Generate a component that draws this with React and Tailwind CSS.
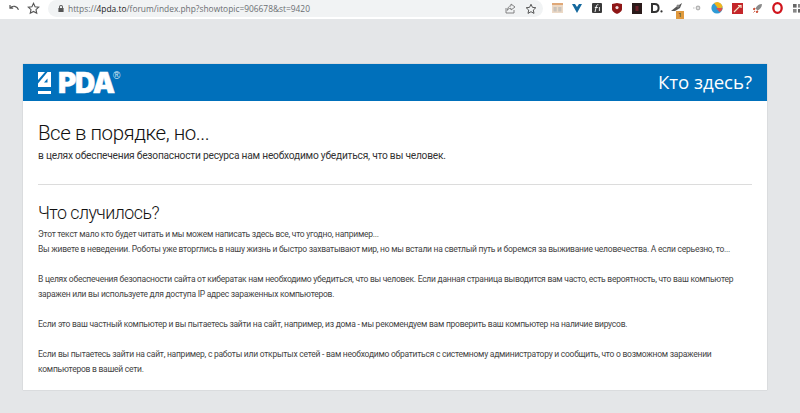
import React from "react";

const font = { fontFamily: 'Roboto, "Open Sans", sans-serif' };

const Slot = ({ children }) => (
  <div className="w-[20px] shrink-0 flex items-center justify-center relative">{children}</div>
);

function Toolbar() {
  return (
    <div className="h-[19px] bg-white flex items-start overflow-hidden shrink-0">
      <svg className="ml-[9px] mt-[4px] shrink-0" width="11" height="9" viewBox="0 0 11 9" fill="none" stroke="#555" strokeWidth="1.2">
        <path d="M1 1v3.2h3.2M1.2 4c1.2-1.4 3-2 4.6-1.6 1.600.4 3 1.500 3.700 3.400" />
      </svg>
      <svg className="ml-[7px] mt-[2px] shrink-0" width="13" height="13" viewBox="0 0 24 24" fill="none" stroke="#555" strokeWidth="2">
        <path d="M12 2.5l2.900 6.200 6.700.8-5 4.600 1.400 6.700-6-3.400-6 3.400 1.400-6.700-5-4.600 6.700-.8z" />
      </svg>
      <div className="ml-[8px] w-[495px] h-[17px] shrink-0 rounded-full bg-[#f1f3f4] flex items-center pl-[9px]">
        <svg width="6" height="7" viewBox="0 0 6 7" fill="#555" className="shrink-0 ml-[1px]">
          <path d="M1 3V2a2 2 0 0 1 4 0v1h.6v4H.4V3zM1.900 3h2.200V2a1.100 1.100 0 0 0-2.200 0z" />
        </svg>
        <span className="ml-[4px] mt-[1px] text-[8.4px] leading-none text-[#6b6f73] whitespace-nowrap" style={{ fontFamily: '"Open Sans", sans-serif' }}>
          https://<span className="text-[#222] font-medium">4pda.to</span>/forum/index.php?showtopic=906678&amp;st=9420
        </span>
        <svg className="ml-auto shrink-0" width="11" height="11" viewBox="0 0 11 11" fill="none" stroke="#777" strokeWidth="0.9">
          <path d="M1 5v5h8V7M6 1l4 3-4 3V5.300C4 5.300 3 6 2.400 7.400 2.500 5 3.800 3 6 2.800z" />
        </svg>
        <svg className="ml-[9px] mr-[6px] shrink-0" width="12" height="12" viewBox="0 0 24 24" fill="none" stroke="#555" strokeWidth="2">
          <path d="M12 2.5l2.900 6.200 6.700.8-5 4.600 1.400 6.700-6-3.400-6 3.400 1.400-6.700-5-4.600 6.700-.8z" />
        </svg>
      </div>
      <div className="flex items-center ml-[4px] h-[16px] shrink-0">
        <Slot><svg width="11" height="10" viewBox="0 0 11 10"><rect width="11" height="10" fill="#ecd9c6" /><rect width="11" height="2" fill="#e0a878" /><rect x="1.500" y="4" width="3.200" height="4.500" fill="#c9c2ba" /><rect x="6.200" y="4" width="3.200" height="4.500" fill="#c9c2ba" /></svg></Slot>
        <Slot><svg width="10" height="9" viewBox="0 0 10 9"><path d="M0 0h3l2 3 2-3h3L5 9z" fill="#14689e" /></svg></Slot>
        <Slot><svg width="10" height="10" viewBox="0 0 10 10"><rect width="10" height="10" rx="1" fill="#3a3a3a" /><path d="M3 9L4.400 3c.2-1 1-1.400 2-1.200M2.800 4.500h3M7.400 4v4" stroke="#fff" strokeWidth="0.9" fill="none" /></svg></Slot>
        <Slot><svg width="10" height="11" viewBox="0 0 10 11"><path d="M0 1l5-1 5 1v5c0 2.500-3 4-5 5-2-1-5-2.500-5-5z" fill="#8e1616" /><circle cx="5" cy="4.600" r="1.600" fill="#f0dada" /></svg></Slot>
        <Slot><svg width="10" height="11" viewBox="0 0 10 11"><rect width="10" height="11" fill="#2a1a1a" /><rect x="3.500" y="3" width="3" height="5" fill="#6a1f28" /></svg></Slot>
        <Slot><svg width="12" height="10" viewBox="0 0 12 10"><path d="M1 1h2.600c2.600 0 4 1.500 4 4s-1.400 4-4 4H1z" fill="none" stroke="#333" strokeWidth="2" /><circle cx="10.500" cy="8.400" r="1.100" fill="#333" /></svg></Slot>
        <Slot>
          <svg width="12" height="9" viewBox="0 0 12 9" className="-mt-[2px]"><path d="M0 8l5-4 6-4-2 5-5 3z" fill="#555" /><circle cx="7" cy="3" r="1.500" fill="#888" /></svg>
          <span className="absolute left-[9px] top-[6px] w-[8px] h-[8px] bg-[#e09a3e] text-[6px] leading-[8px] text-center text-[#333]">1</span>
        </Slot>
        <Slot><svg width="8" height="6" viewBox="0 0 8 6"><circle cx="5" cy="3" r="2.400" fill="#b5b5b5" /><circle cx="5" cy="3" r="1" fill="#eee" /><rect y="2.400" width="1.600" height="1.200" fill="#ccc" /></svg></Slot>
        <Slot><svg width="12" height="12" viewBox="0 0 12 12"><circle cx="6" cy="6" r="5.600" fill="#2f9bd6" /><path d="M3 1a5.600 5.600 0 0 1 8.600 4.400L7 6.500z" fill="#f2b51d" /><path d="M5 6l6.500 0c0 2-1.400 3.500-3 4z" fill="#d9534f" /></svg></Slot>
        <Slot><svg width="11" height="11" viewBox="0 0 11 11"><rect width="11" height="11" fill="#c4262a" /><path d="M2 9l6-6M6 2.500h3v2.400" stroke="#f4e2c8" strokeWidth="1.200" fill="none" /></svg></Slot>
        <Slot><svg width="11" height="11" viewBox="0 0 11 11"><path d="M10 1C7 1 4.500 3 3.500 5.500l2 2C8 6.500 10 4 10 1z" fill="#8a8a8a" /><path d="M3 5L1 6l1.500 1zM6 8l-1 2-1-1.500zM3 8l-1.500 1.500" fill="#c8442a" stroke="#c8442a" strokeWidth="0.8" /></svg></Slot>
        <Slot><svg width="11" height="12" viewBox="0 0 11 12"><ellipse cx="5.500" cy="6" rx="4.200" ry="4.800" fill="none" stroke="#d0141c" strokeWidth="2.300" /></svg></Slot>
        <Slot><svg width="9" height="9" viewBox="0 0 9 9"><rect width="3.600" height="3.600" fill="#666" /><rect x="5" width="3.600" height="3.600" fill="#888" /><rect y="5" width="3.600" height="3.600" fill="#888" /><rect x="5" y="5" width="3.600" height="3.600" fill="#666" /></svg></Slot>
      </div>
    </div>
  );
}

function Logo() {
  return (
    <div className="ml-[15px] flex items-center relative h-[24px]">
      <svg width="13" height="22" viewBox="0 0 13 22" className="shrink-0">
        <path d="M0 0h7L0 8zM9.500 0H13V15H0v-3.500zM6 10.500h3.500V6.500z M0 19h13v3H0z" fill="#fff" fillRule="evenodd" />
      </svg>
      <span
        className="ml-[7px] text-[28px] leading-none text-white tracking-[-1.3px] whitespace-nowrap font-black"
        style={{ fontFamily: 'Inter, "Liberation Sans", sans-serif', WebkitTextStroke: "0.5px #fff" }}
      >
        PDA
      </span>
      <span className="absolute left-[75px] top-[0px] text-[10px] leading-none text-[#dbe9f4]" style={{ fontFamily: '"Liberation Sans", sans-serif' }}>®</span>
    </div>
  );
}

export default function App() {
  return (
    <div className="w-[800px] h-[413px] bg-[#e4e6e8] overflow-hidden text-[#333]" style={font}>
      <Toolbar />
      <div className="mx-[23px] mt-[45px] w-[744px] h-[326px] bg-white shadow-[0_0_1px_rgba(0,0,0,0.25)] flex flex-col">
        <div className="h-[37px] bg-[#0070bb] flex items-center justify-between pr-[15px] shrink-0">
          <Logo />
          <span className="text-[18.6px] leading-none text-white" style={{ fontFamily: '"Open Sans", sans-serif' }}>Кто здесь?</span>
        </div>
        <div className="px-[15px] flex flex-col">
          <h1 className="mt-[20px] text-[20.5px] font-light tracking-[-0.45px] leading-[24px] text-[#111] whitespace-nowrap">Все в порядке, но...</h1>
          <p className="mt-[3px] text-[10.2px] tracking-[-0.22px] leading-[15px] text-[#333] whitespace-nowrap">в целях обеспечения безопасности ресурса нам необходимо убедиться, что вы человек.</p>
          <hr className="mt-[21px] border-0 h-px bg-[#dcdcdc]" />
          <h2 className="mt-[16px] text-[17.8px] font-light tracking-[-0.5px] leading-[24px] text-[#111] whitespace-nowrap">Что случилось?</h2>
          <div className="mt-[2px] text-[8.5px] tracking-[-0.25px] leading-[15px] text-[#444] whitespace-nowrap">
            <p>Этот текст мало кто будет читать и мы можем написать здесь все, что угодно, например...</p>
            <p>Вы живете в неведении. Роботы уже вторглись в нашу жизнь и быстро захватывают мир, но мы встали на светлый путь и боремся за выживание человечества. А если серьезно, то...</p>
            <p className="mt-[15px]">В целях обеспечения безопасности сайта от кибератак нам необходимо убедиться, что вы человек. Если данная страница выводится вам часто, есть вероятность, что ваш компьютер</p>
            <p>заражен или вы используете для доступа IP адрес зараженных компьютеров.</p>
            <p className="mt-[15px]">Если это ваш частный компьютер и вы пытаетесь зайти на сайт, например, из дома - мы рекомендуем вам проверить ваш компьютер на наличие вирусов.</p>
            <p className="mt-[15px]">Если вы пытаетесь зайти на сайт, например, с работы или открытых сетей - вам необходимо обратиться с системному администратору и сообщить, что о возможном заражении</p>
            <p>компьютеров в вашей сети.</p>
          </div>
        </div>
      </div>
    </div>
  );
}
